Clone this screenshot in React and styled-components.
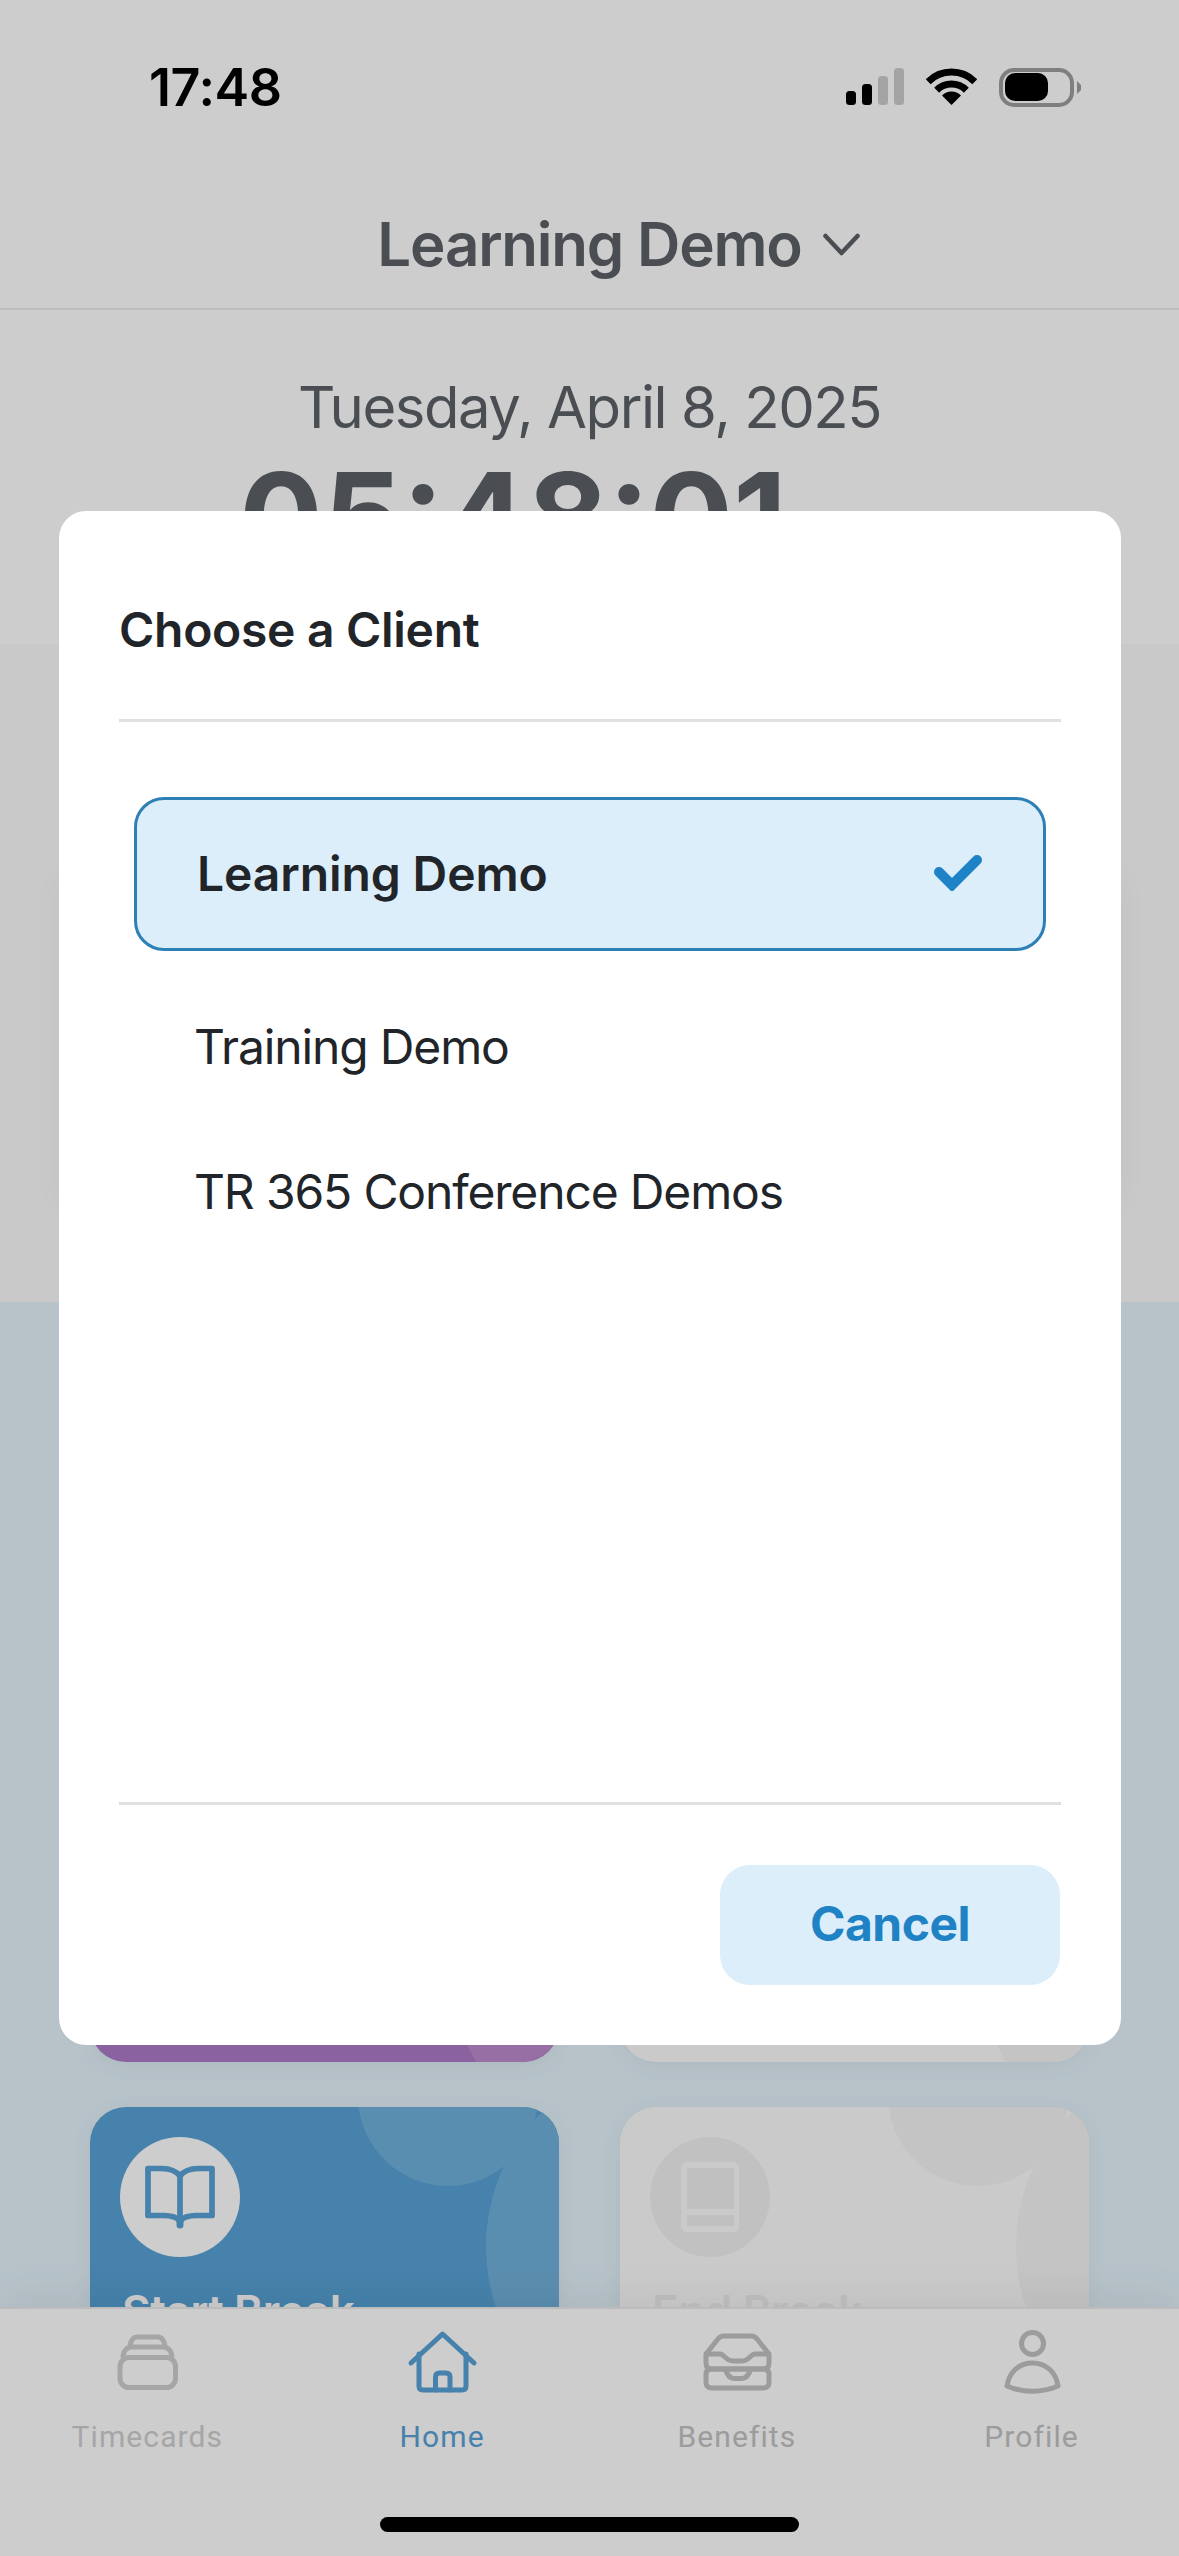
import React from "react";
import styled, { createGlobalStyle } from "styled-components";

const GlobalStyle = createGlobalStyle`
  html, body {
    margin: 0;
    padding: 0;
    background: #fff;
    font-family: "Inter", "Liberation Sans", sans-serif;
  }
  * { box-sizing: border-box; }
`;

const Page = styled.div`
  position: relative;
  width: 1179px;
  height: 2556px;
  overflow: hidden;
  display: flex;
  flex-direction: column;
  background: #fff;
`;

const StatusBar = styled.div`
  height: 130px;
  flex: none;
  display: flex;
  justify-content: space-between;
  padding: 68px 98px 0 149px;
`;

const Time = styled.div`
  font-size: 52px;
  line-height: 39px;
  font-weight: 600;
  color: #000;
  letter-spacing: -0.4px;
`;

const StatusIcons = styled.div`
  display: flex;
  align-items: flex-start;
  gap: 22px;
  svg { display: block; }
`;

const Header = styled.div`
  height: 180px;
  flex: none;
  padding: 50px 0 0 58px;
  display: flex;
  justify-content: center;
  align-items: center;
  gap: 21px;
  border-bottom: 2px solid #ebebeb;
`;

const HeaderTitle = styled.div`
  font-size: 60px;
  line-height: 72px;
  font-weight: 600;
  letter-spacing: -1.2px;
  color: #5d6267;
`;

const ClockPanel = styled.div`
  height: 334px;
  flex: none;
  padding-top: 62px;
  overflow: hidden;
  text-align: center;
  color: #5d6267;
`;

const DateLine = styled.div`
  font-size: 58px;
  line-height: 70px;
  font-weight: 400;
  letter-spacing: -1.45px;
`;

const ClockLine = styled.div`
  margin-top: 10px;
  font-size: 124px;
  line-height: 130px;
  font-weight: 700;
`;

const ClockSuffix = styled.span`
  font-size: 60px;
  font-weight: 600;
  margin-left: 59px;
`;

const LocationPanel = styled.div`
  height: 658px;
  flex: none;
  padding-top: 232px;
  background: #fafafa;
`;

const LocationCard = styled.div`
  height: 327px;
  margin: 0 58px 0 59px;
  background: #fafafa;
  box-shadow: 0 0 30px rgba(0, 0, 0, 0.035);
`;

const Main = styled.div`
  flex: 1;
  min-height: 0;
  overflow: hidden;
  padding: 400px 90px 0;
  background: #e4f3fb;
`;

const CardGrid = styled.div`
  display: grid;
  grid-template-columns: 469px 469px;
  grid-auto-rows: 360px;
  column-gap: 61px;
  row-gap: 45px;
`;

const ActionCard = styled.div`
  position: relative;
  overflow: hidden;
  border-radius: 36px;
  padding: 30px 30px 0;
  background: ${({ $fill }) => $fill};
  box-shadow: 0 4px 24px rgba(0, 0, 0, 0.05);
`;

const Swoosh = styled.div`
  position: absolute;
  border-radius: 50%;
  background: ${({ $fill }) => $fill};
  left: ${({ $x, $r }) => $x - $r}px;
  top: ${({ $y, $r }) => $y - $r}px;
  width: ${({ $r }) => $r * 2}px;
  height: ${({ $r }) => $r * 2}px;
`;

const IconDisc = styled.div`
  position: relative;
  width: 120px;
  height: 120px;
  border-radius: 50%;
  display: flex;
  align-items: center;
  justify-content: center;
  background: ${({ $fill }) => $fill};
`;

const CardLabel = styled.div`
  position: relative;
  margin-top: 26px;
  margin-left: 2px;
  font-size: 44px;
  line-height: 56px;
  font-weight: 600;
  letter-spacing: -0.4px;
  white-space: nowrap;
  color: ${({ $color }) => $color};
`;

const TabBar = styled.div`
  position: relative;
  height: 249px;
  flex: none;
  display: flex;
  flex-direction: column;
  background: #fff;
  border-top: 2px solid #eaeaea;
  box-shadow: 0 -14px 36px rgba(0, 0, 0, 0.05);
`;

const Tabs = styled.div`
  display: grid;
  grid-template-columns: repeat(4, 1fr);
  padding-top: 21px;
`;

const Tab = styled.div`
  display: flex;
  flex-direction: column;
  align-items: center;
  color: ${({ $color }) => $color};
  svg { display: block; }
`;

const TabLabel = styled.div`
  margin-top: 17px;
  font-family: "Roboto", "Liberation Sans", sans-serif;
  font-size: 30px;
  line-height: 36px;
  letter-spacing: 1.1px;
`;

const HomeIndicator = styled.div`
  align-self: center;
  margin-top: auto;
  margin-bottom: 24px;
  width: 419px;
  height: 15px;
  border-radius: 8px;
  background: #000;
`;

const Scrim = styled.div`
  position: absolute;
  inset: 0;
  background: rgba(0, 0, 0, 0.196);
`;

const Modal = styled.div`
  position: absolute;
  left: 59px;
  top: 511px;
  width: 1062px;
  height: 1534px;
  border-radius: 27px;
  background: #fff;
  display: flex;
  flex-direction: column;
  padding: 0 60px 60px;
`;

const ModalHeader = styled.div`
  height: 211px;
  flex: none;
  padding-top: 90px;
  border-bottom: 3px solid #e0e0e0;
`;

const ModalTitle = styled.div`
  font-size: 48px;
  line-height: 58px;
  font-weight: 600;
  letter-spacing: -0.3px;
  color: #212529;
`;

const ClientList = styled.div`
  flex: 1;
  padding: 75px 15px 0;
`;

const ClientRow = styled.div`
  display: flex;
  align-items: center;
  justify-content: space-between;
  height: ${({ $selected }) => ($selected ? "154px" : "145px")};
  margin-bottom: ${({ $selected }) => ($selected ? "23px" : "0")};
  padding: 0 60px ${({ $selected }) => ($selected ? "2px" : "0")} ${({ $selected }) => ($selected ? "60px" : "57px")};
  border-radius: 30px;
  border: 3px solid ${({ $selected }) => ($selected ? "#2c80b6" : "transparent")};
  background: ${({ $selected }) => ($selected ? "#dbeefa" : "transparent")};
  font-size: 48px;
  font-weight: ${({ $selected }) => ($selected ? 600 : 400)};
  letter-spacing: ${({ $selected }) => ($selected ? "-0.1px" : "-1.15px")};
  color: #212529;
`;

const ModalFooter = styled.div`
  flex: none;
  display: flex;
  justify-content: flex-end;
  padding-top: 60px;
  border-top: 3px solid #e0e0e0;
`;

const CancelButton = styled.button`
  width: 340px;
  height: 120px;
  margin-right: 1px;
  padding: 0 0 3px;
  border: none;
  border-radius: 30px;
  background: #dbeefa;
  color: #1f82c4;
  font-family: inherit;
  font-size: 48px;
  font-weight: 700;
  letter-spacing: -0.5px;
`;

const SignalIcon = () => (
  <svg width="58" height="37" viewBox="0 0 58 37">
    <rect x="0" y="23" width="10" height="14" rx="3.5" fill="#000" />
    <rect x="16" y="16" width="10" height="21" rx="3.5" fill="#000" />
    <rect x="32" y="8" width="10" height="29" rx="3.5" fill="#cdcdcd" />
    <rect x="48" y="0" width="10" height="37" rx="3.5" fill="#cdcdcd" />
  </svg>
);

const WifiIcon = () => (
  <svg width="51" height="37" viewBox="0 0 51 37" fill="none" stroke="#000" strokeWidth="7">
    <path d="M2.2 13.7A33 33 0 0 1 48.8 13.7" />
    <path d="M10.7 22.2A21 21 0 0 1 40.3 22.2" />
    <path d="M25.5 37L16 27.5A13.5 13.5 0 0 1 35 27.5Z" fill="#000" stroke="none" />
  </svg>
);

const BatteryIcon = () => (
  <svg width="82" height="39" viewBox="0 0 82 39">
    <rect x="2" y="2" width="71" height="35" rx="13" fill="none" stroke="#9f9f9f" strokeWidth="4" />
    <rect x="6" y="5" width="43" height="28" rx="10" fill="#000" />
    <path d="M78 13L82 17V22L78 26Z" fill="#9f9f9f" />
  </svg>
);

const Chevron = () => (
  <svg width="37" height="23" viewBox="0 0 37 23" fill="none" stroke="#5d6267" strokeWidth="4.5" strokeLinecap="round" strokeLinejoin="round">
    <path d="M2.5 3L18.5 20L34.5 3" />
  </svg>
);

const CheckIcon = () => (
  <svg width="49" height="36" viewBox="0 0 49 36" fill="none" stroke="#1d83c6" strokeWidth="10" strokeLinecap="round">
    <path d="M5 17L18 30L43 5" />
  </svg>
);

const OpenBook = ({ color }) => (
  <svg width="70" height="64" viewBox="0 0 70 64" fill="none" stroke={color} strokeWidth="5.7" strokeLinecap="round" strokeLinejoin="round">
    <path d="M35 11C31 6 25 3.500 17 3.500H3V50.500H19C26 50.500 31.500 52 35 56C38.500 52 44 50.500 51 50.500H67V3.500H53C45 3.500 39 6 35 11Z" />
    <path d="M35 11V54" />
    <path d="M35 54V60" strokeWidth="7" />
  </svg>
);

const ClosedBook = () => (
  <svg width="58" height="70" viewBox="0 0 58 70">
    <rect width="58" height="70" rx="6" fill="#fcfcfc" />
    <rect x="6" y="6" width="47" height="41" fill="#efefef" />
    <rect x="6" y="53" width="47" height="11" fill="#efefef" />
  </svg>
);

const TimecardsIcon = () => (
  <svg width="72" height="72" viewBox="0 0 72 72" fill="none" stroke="currentColor" strokeWidth="5" strokeLinecap="round">
    <rect x="9" y="27.5" width="55.5" height="30" rx="9" />
    <path d="M12 26C13 20 16 17 21 17H52C57 17 60 20 61 26" />
    <path d="M19 16C20 10 22 7 26 7H47C51 7 53 10 54 16" />
  </svg>
);

const HomeIcon = () => (
  <svg width="72" height="72" viewBox="0 0 72 72" fill="none" stroke="currentColor" strokeWidth="5" strokeLinecap="round" strokeLinejoin="round">
    <path d="M5 33L36.500 4L68 33" />
    <path d="M13 24V56C13 58.500 14.500 60 17 60H56C58.500 60 60 58.500 60 56V24" />
    <path d="M29.500 60V47C29.500 44.500 31 43 33.500 43H40C42.500 43 44 44.500 44 47V60" />
  </svg>
);

const BenefitsIcon = () => (
  <svg width="72" height="72" viewBox="0 0 72 72" fill="none" stroke="currentColor" strokeWidth="5" strokeLinejoin="round">
    <path d="M5 24L17 9C18.500 7 20 6 23 6H50C53 6 54.500 7 56 9L68 24" />
    <path d="M5 24H19C23 24 25 31 32 31H41C48 31 50 24 54 24H68V33C68 37 66 39 62 39H11C7 39 5 37 5 33Z" />
    <path d="M5 44C5 41 7 39 11 39H62C66 39 68 41 68 44V52C68 56 66 58 62 58H11C7 58 5 56 5 52Z" />
    <path d="M24.500 40C27 46 29 48.500 33 48.500H41C45 48.500 47 46 49.500 40" />
  </svg>
);

const ProfileIcon = () => (
  <svg width="72" height="72" viewBox="0 0 72 72" fill="none" stroke="currentColor" strokeWidth="5" strokeLinejoin="round">
    <ellipse cx="36.500" cy="13.500" rx="11" ry="11" />
    <path d="M11 56C13 42 23 33 36.500 33C50 33 60 42 62 56C46 63 27 63 11 56Z" />
  </svg>
);

const tabs = [
  { label: "Timecards", color: "#cfcfcf", Icon: TimecardsIcon },
  { label: "Home", color: "#57a2d6", Icon: HomeIcon },
  { label: "Benefits", color: "#c2c2c2", Icon: BenefitsIcon },
  { label: "Profile", color: "#c2c2c2", Icon: ProfileIcon },
];

const clients = [
  { name: "Learning Demo", selected: true },
  { name: "Training Demo" },
  { name: "TR 365 Conference Demos" },
];

export default function App() {
  return (
    <Page>
      <GlobalStyle />
      <StatusBar>
        <Time>17:48</Time>
        <StatusIcons>
          <SignalIcon />
          <WifiIcon />
          <BatteryIcon />
        </StatusIcons>
      </StatusBar>
      <Header>
        <HeaderTitle>Learning Demo</HeaderTitle>
        <Chevron />
      </Header>
      <ClockPanel>
        <DateLine>Tuesday, April 8, 2025</DateLine>
        <ClockLine>
          05:48:01<ClockSuffix>PM</ClockSuffix>
        </ClockLine>
      </ClockPanel>
      <LocationPanel>
        <LocationCard />
      </LocationPanel>
      <Main>
        <CardGrid>
          <ActionCard $fill="#ad7ac7">
            <Swoosh $fill="#bc8acd" $x={550} $y={262} $r={191} />
          </ActionCard>
          <ActionCard $fill="#fcfcfc">
            <Swoosh $fill="#f4f4f4" $x={550} $y={262} $r={191} />
          </ActionCard>
          <ActionCard $fill="#57a2d6">
            <Swoosh $fill="#71b1db" $x={358} $y={-11} $r={90} />
            <Swoosh $fill="#71b1db" $x={587} $y={140} $r={191} />
            <IconDisc $fill="#ffffff">
              <OpenBook color="#57a2d6" />
            </IconDisc>
            <CardLabel $color="#ffffff">Start Break</CardLabel>
          </ActionCard>
          <ActionCard $fill="#fcfcfc">
            <Swoosh $fill="#f4f4f4" $x={358} $y={-11} $r={90} />
            <Swoosh $fill="#f4f4f4" $x={587} $y={140} $r={191} />
            <IconDisc $fill="#f1f1f1">
              <ClosedBook />
            </IconDisc>
            <CardLabel $color="#eeeeee">End Break</CardLabel>
          </ActionCard>
        </CardGrid>
      </Main>
      <TabBar>
        <Tabs>
          {tabs.map(({ label, color, Icon }) => (
            <Tab key={label} $color={color}>
              <Icon />
              <TabLabel>{label}</TabLabel>
            </Tab>
          ))}
        </Tabs>
        <HomeIndicator />
      </TabBar>
      <Scrim />
      <Modal>
        <ModalHeader>
          <ModalTitle>Choose a Client</ModalTitle>
        </ModalHeader>
        <ClientList>
          {clients.map(({ name, selected }) => (
            <ClientRow key={name} $selected={selected}>
              {name}
              {selected && <CheckIcon />}
            </ClientRow>
          ))}
        </ClientList>
        <ModalFooter>
          <CancelButton>Cancel</CancelButton>
        </ModalFooter>
      </Modal>
    </Page>
  );
}
